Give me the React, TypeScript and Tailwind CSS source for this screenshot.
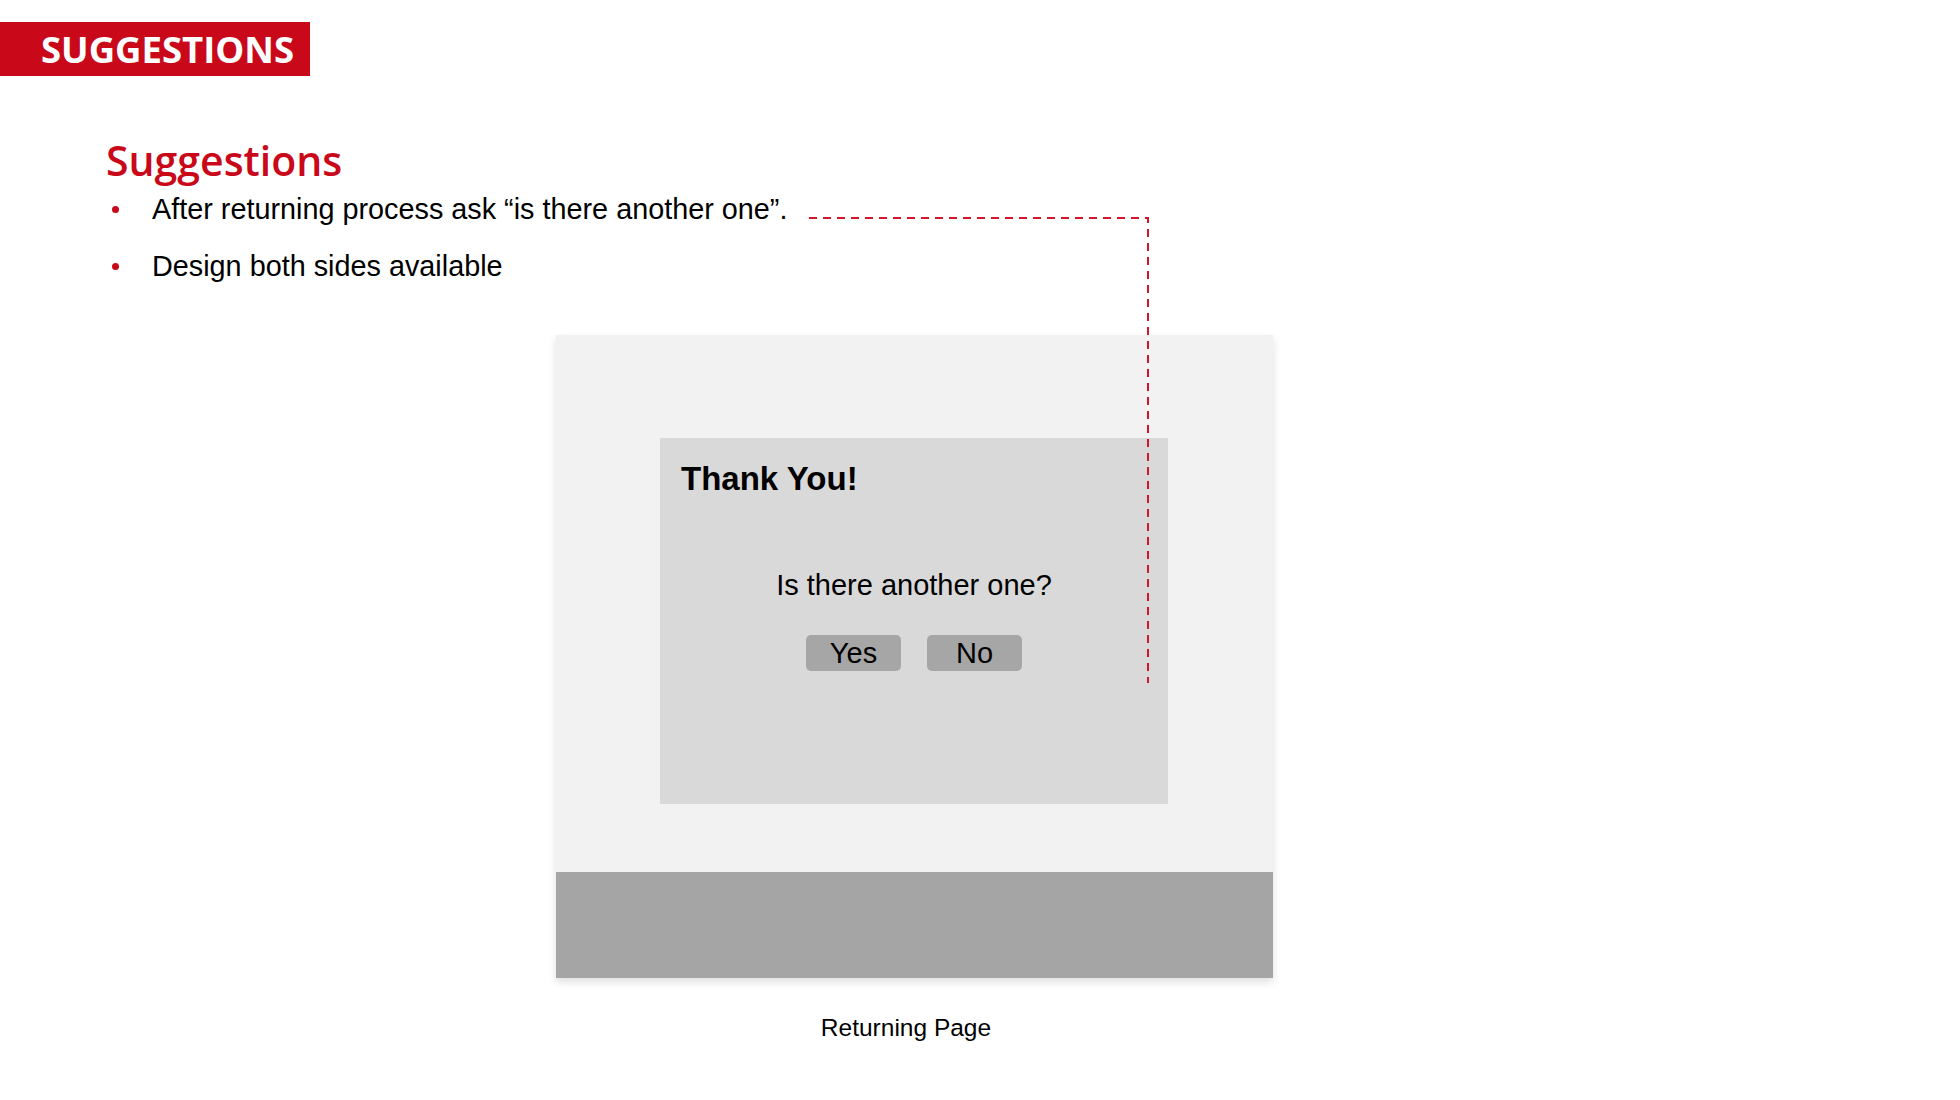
const bullets = [
  'After returning process ask “is there another one”.',
  'Design both sides available',
];

const Connector = () => (
  // dashed callout from the first bullet down into the dialog
  <svg
    className="absolute left-0 top-0 pointer-events-none"
    width={1960}
    height={1100}
    viewBox="0 0 1960 1100"
  >
    <path
      d="M809 218 H1148 V683"
      fill="none"
      stroke="#d3142a"
      strokeWidth={2}
      strokeDasharray="8 6"
    />
  </svg>
);

const ReturningDialog = () => (
  <div className="ml-[104px] mt-[103px] flex h-[366px] w-[508px] flex-col bg-[#d9d9d9] px-[21px] pt-[24px]">
    <h2 className="text-[33px] font-bold leading-none text-black">Thank You!</h2>
    <p className="mt-[76px] text-center text-[29px] leading-none text-black">Is there another one?</p>
    <div className="mt-[35px] flex justify-center gap-[26px]">
      {['Yes', 'No'].map((label) => (
        <button
          key={label}
          className="flex h-[36px] w-[95px] items-center justify-center rounded-[5px] bg-[#a6a6a6] pt-[1px] text-[29px] leading-none text-black"
        >
          {label}
        </button>
      ))}
    </div>
  </div>
);

export default function App() {
  return (
    <div className="relative h-[1100px] w-[1960px] overflow-hidden bg-white font-['Liberation_Sans',Arial,sans-serif]">
      <div className="flex flex-col">
        {/* slide tag */}
        <div className="mt-[22px] flex h-[54px] w-[310px] items-center bg-[#c9081a] pl-[41px]">
          <span className="font-['Open_Sans',sans-serif] text-[36.5px] font-bold leading-none text-white">
            SUGGESTIONS
          </span>
        </div>

        <div className="mt-[64px] pl-[106px]">
          <h1 className="font-['Open_Sans',sans-serif] text-[41px] font-semibold leading-none text-[#c9081a]">
            Suggestions
          </h1>
          <ul className="mt-[14px] flex flex-col gap-[28px]">
            {bullets.map((b) => (
              <li key={b} className="flex h-[29px] items-center">
                <span className="ml-[6px] h-[7px] w-[7px] rounded-full bg-[#c9081a]" />
                <span className="ml-[33px] text-[28.8px] leading-none text-black">{b}</span>
              </li>
            ))}
          </ul>
        </div>

        {/* wireframe */}
        <div className="ml-[556px] mt-[54px] flex h-[643px] w-[717px] flex-col shadow-[0_4px_8px_rgba(0,0,0,0.13)]">
          <div className="flex-1 bg-[#f2f2f2]">
            <ReturningDialog />
          </div>
          <div className="h-[106px] bg-[#a5a5a5]" />
        </div>

        <div className="ml-[556px] mt-[38px] w-[717px] pr-[17px] text-center text-[24.5px] leading-none text-black">
          Returning Page
        </div>
      </div>

      <Connector />
    </div>
  );
}
